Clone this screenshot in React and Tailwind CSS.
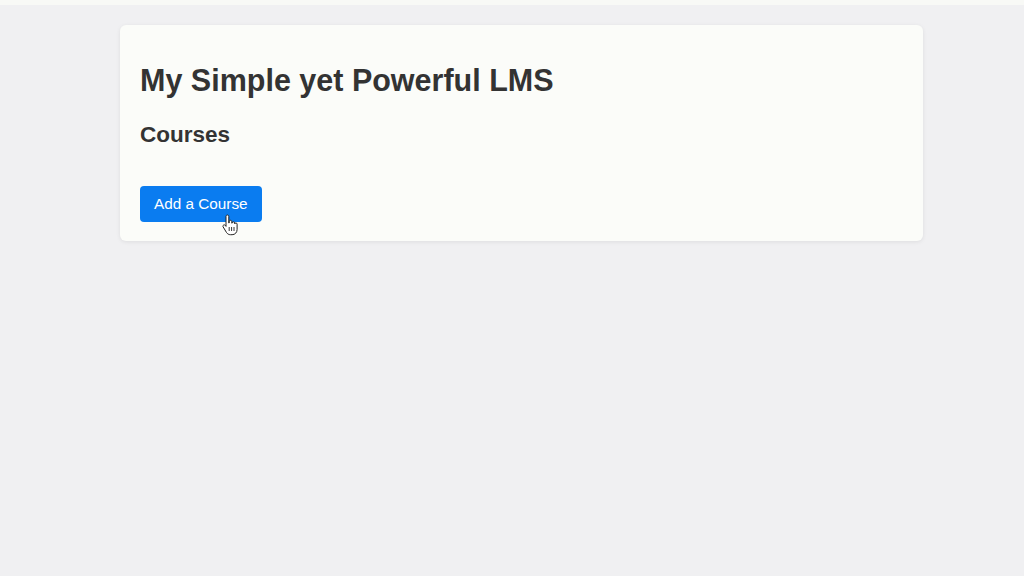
import React from "react";

const HandCursor = () => (
  <svg
    width="16"
    height="22"
    viewBox="0 0 16 22"
    className="absolute left-[82px] top-[28px]"
  >
    <path
      d="M4 2.5c0-.9.6-1.5 1.4-1.5s1.4.6 1.4 1.5V9l.4-.1V7.6c0-.8.6-1.3 1.3-1.3s1.3.5 1.3 1.3v1.6l.3-.1c0-.8.6-1.3 1.3-1.3s1.3.5 1.3 1.3v.8c.1-.6.6-1 1.2-1 .7 0 1.2.5 1.2 1.3v5.2c0 3-2 5.3-5 5.3H8.5c-1.8 0-3-.8-4-2.2L1.2 13c-.5-.7-.3-1.5.3-1.9.6-.4 1.4-.3 1.9.3L4 12.4V2.5z"
      fill="#fff"
      stroke="#222"
      strokeWidth="1"
      strokeLinejoin="round"
    />
    <path d="M7.2 13v4M9.6 13v4M12 13v4" stroke="#222" strokeWidth="0.9" />
  </svg>
);

export default function App() {
  return (
    <div className="min-h-[576px] bg-[#f0f0f2] font-['Liberation_Sans',Arial,sans-serif]">
      <div className="h-[5px] bg-[#f8f9f6]" />
      <div className="pt-[20px]">
        <div className="ml-[120px] w-[803px] rounded-[6px] bg-[#fbfcf9] px-[20px] pt-[20px] pb-[19px] shadow-[0_1px_4px_rgba(0,0,0,0.08)]">
          <h1 className="mt-[18px] text-[30.5px] leading-[34px] font-bold text-[#333]">
            My Simple yet Powerful LMS
          </h1>
          <h2 className="mt-[25px] text-[22.5px] leading-[26px] font-bold text-[#333]">
            Courses
          </h2>
          <div className="relative mt-[38px] w-fit">
            <button className="h-[36px] rounded-[4px] bg-[#0a7cf0] px-[14px] text-[15.3px] text-white">
              Add a Course
            </button>
            <HandCursor />
          </div>
        </div>
      </div>
    </div>
  );
}
